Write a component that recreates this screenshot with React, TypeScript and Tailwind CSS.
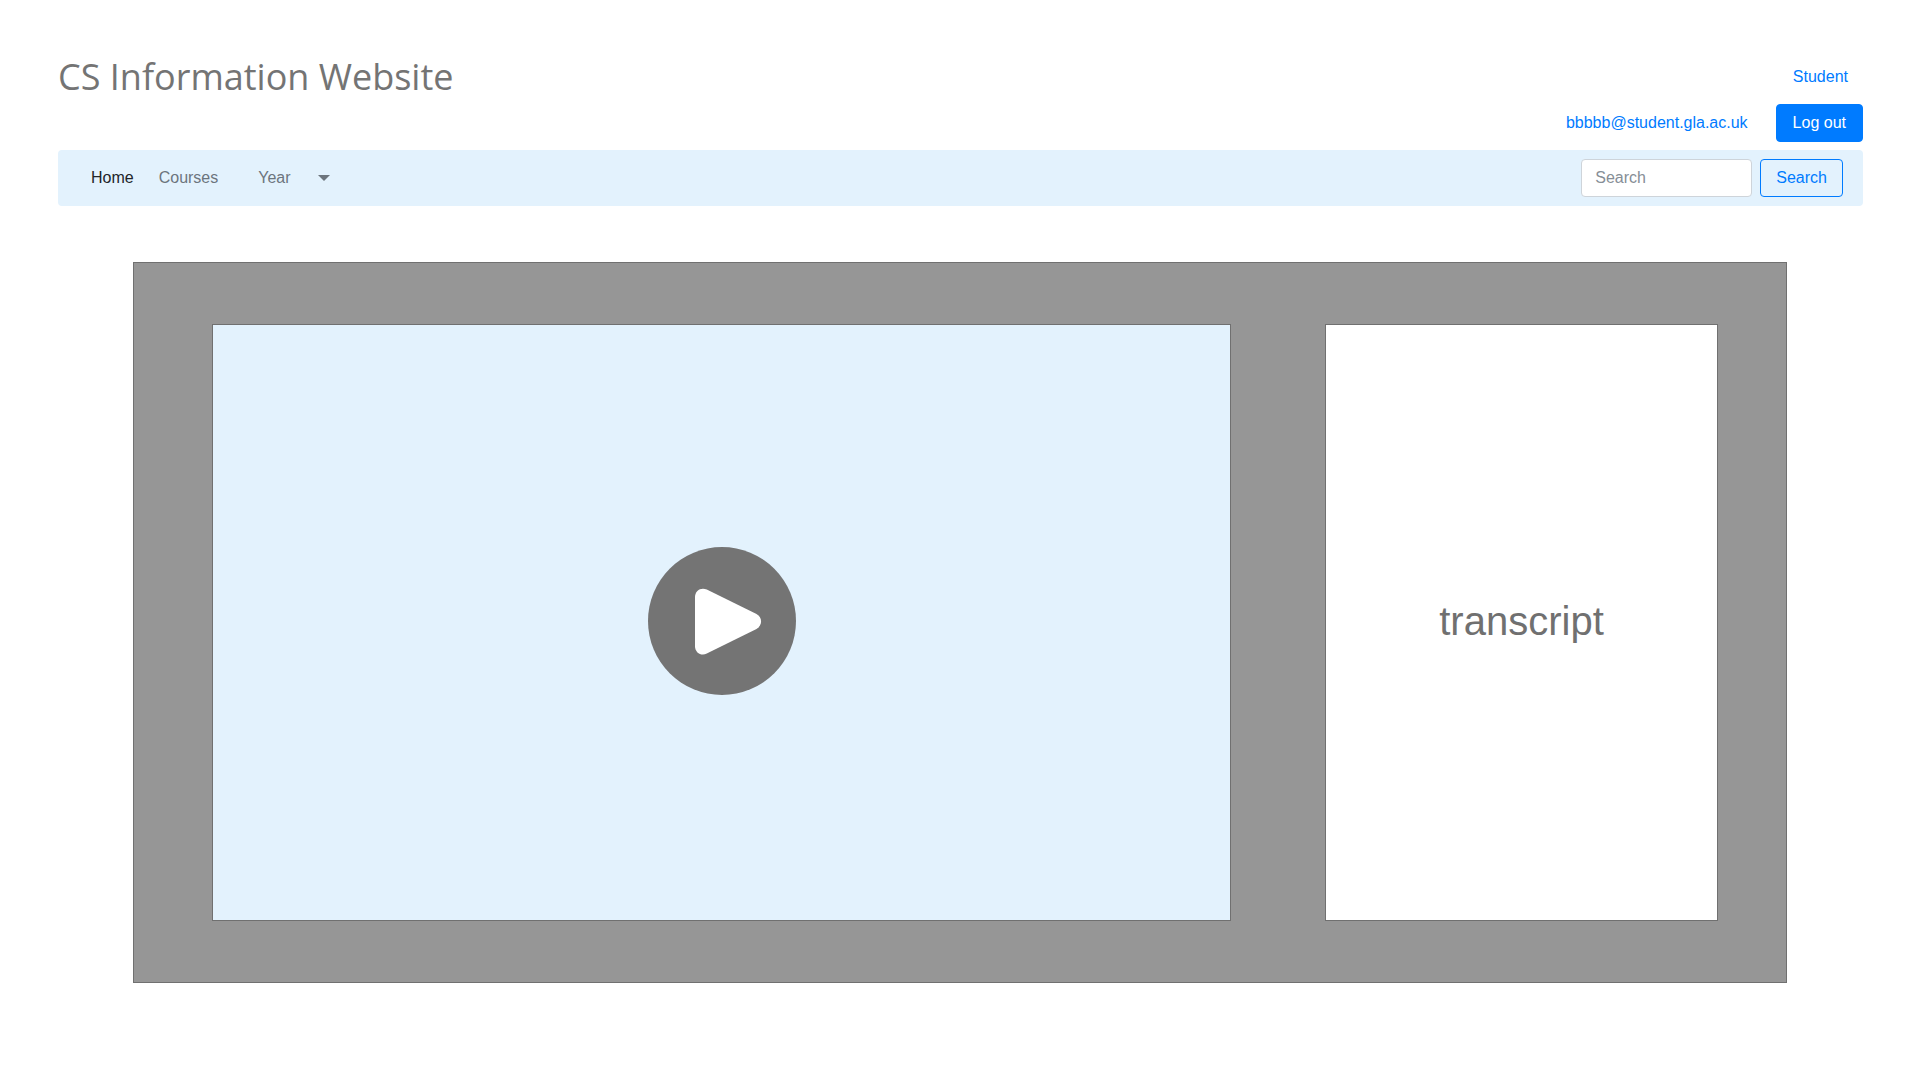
import React from "react";

function Header() {
  return (
    <header className="flex items-start justify-between">
      <h1 className="font-['Open_Sans',sans-serif] text-[36px] leading-[56px] font-normal text-[#747474]">
        CS Information Website
      </h1>
      <div className="flex flex-col items-end gap-2 pt-[9px] pb-2">
        <a href="#student" className="px-[15px] py-[7px] leading-6 text-[#007bff]">
          Student
        </a>
        <div className="flex items-center gap-7">
          <a href="mailto:bbbbb@student.gla.ac.uk" className="text-[#007bff]">
            bbbbb@student.gla.ac.uk
          </a>
          <button
            type="button"
            className="rounded border border-[#007bff] bg-[#007bff] px-4 py-1.5 leading-6 text-white"
          >
            Log out
          </button>
        </div>
      </div>
    </header>
  );
}

function NavBar() {
  return (
    <nav className="flex h-14 items-center justify-between rounded bg-[#e3f2fd] pr-5 pl-[33px]">
      <div className="flex items-center text-[#6c757d]">
        <a href="#home" className="mr-[25px] text-[#212529]">
          Home
        </a>
        <a href="#courses" className="mr-10">
          Courses
        </a>
        <button type="button" aria-haspopup="menu" className="flex items-center gap-[27px]">
          Year
          <svg width="12" height="6" viewBox="0 0 12 6" fill="currentColor" aria-hidden="true">
            <path d="M0 0h12L6 6z" />
          </svg>
        </button>
      </div>
      <form className="flex gap-2" onSubmit={(e) => e.preventDefault()}>
        <input
          type="text"
          aria-label="Search"
          placeholder="Search"
          className="w-[171px] rounded border border-[#ced4da] bg-white px-[13px] py-1.5 leading-6 text-[#495057] placeholder:text-[#868e96]"
        />
        <button
          type="submit"
          className="rounded border border-[#007bff] px-[15px] py-1.5 leading-6 text-[#007bff]"
        >
          Search
        </button>
      </form>
    </nav>
  );
}

function PlayIcon() {
  return (
    <svg width="148" height="148" viewBox="0 0 148 148" aria-hidden="true">
      <circle cx="74" cy="74" r="74" fill="#747474" />
      <path
        d="M47 50C47 43.700 53 40 58.800 42.600L108.500 67.100C114.600 70.200 114.600 78.800 108.500 81.900L58.800 106.600C53 109.400 47 105.500 47 99.200Z"
        fill="#fff"
      />
    </svg>
  );
}

export default function App() {
  return (
    <div className="min-h-screen bg-white pt-[49px] pr-[57px] pb-24 pl-[58px] font-['Liberation_Sans',Arial,sans-serif] text-base">
      <Header />
      <NavBar />
      <main className="mt-14 mr-[76px] ml-[75px] grid grid-cols-[1019fr_393fr] gap-x-[94px] border border-[#707070] bg-[#969696] py-[61px] pr-[68px] pl-[78px]">
        <section
          aria-label="Video"
          className="flex h-[597px] items-center justify-center border border-[#707070] bg-[#e3f2fd] pb-[3px]"
        >
          <button type="button" aria-label="Play video" className="rounded-full">
            <PlayIcon />
          </button>
        </section>
        <section className="flex items-center justify-center border border-[#707070] bg-white pb-[3px]">
          <p className="text-[40px] leading-12 text-[#707070]">transcript</p>
        </section>
      </main>
    </div>
  );
}
